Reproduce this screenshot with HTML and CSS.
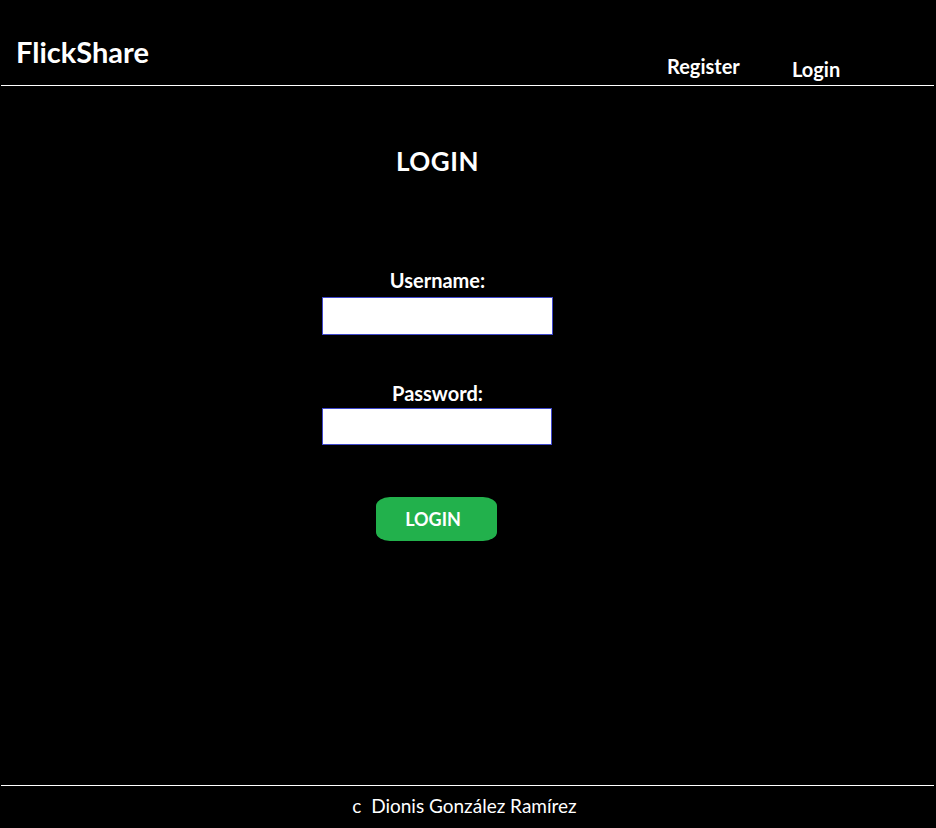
FILE: index.html
```html
<!DOCTYPE html>
<html lang="es">
<head>
<meta charset="utf-8">
<title>FlickShare - Login</title>
<link rel="stylesheet" href="styles.css">
</head>
<body>
<div class="page">
  <header class="topbar">
    <div class="brand">FlickShare</div>
    <a class="nav-link nav-register" href="#">Register</a>
    <a class="nav-link nav-login" href="#">Login</a>
  </header>
  <main class="content">
    <h1 class="title">LOGIN</h1>
    <form class="login-form">
      <label class="field-label label-user" for="user">Username:</label>
      <input class="field-input input-user" id="user" type="text">
      <label class="field-label label-pass" for="pass">Password:</label>
      <input class="field-input input-pass" id="pass" type="password">
      <button class="submit" type="button">LOGIN</button>
    </form>
  </main>
  <footer class="footer">
    <p class="credit">c&nbsp;&nbsp;Dionis González Ramírez</p>
  </footer>
</div>
</body>
</html>
```
FILE: styles.css
```css
* { box-sizing: border-box; }

html, body {
  margin: 0;
  padding: 0;
  background: #000;
}

body {
  font-family: Lato, "Open Sans", "Noto Sans", sans-serif;
  color: #fff;
}

.page {
  display: flex;
  flex-direction: column;
  min-height: 828px;
}

.topbar {
  display: grid;
  grid-template-columns: 651px 125px auto;
  align-items: start;
  height: 86px;
  padding-left: 15px;
  margin: 0 2px 0 1px;
  border-bottom: 1px solid #fff;
}

.brand {
  font-size: 29px;
  font-weight: 700;
  line-height: 34px;
  margin-top: 35px;
}

.nav-link {
  color: #fff;
  text-decoration: none;
  font-size: 20px;
  font-weight: 700;
  line-height: 24px;
}

.nav-register { margin-top: 54px; }
.nav-login { margin-top: 57px; }

.content {
  flex: 1;
  display: flex;
  flex-direction: column;
  align-items: center;
  padding-right: 61px;
}

.title {
  margin: 60px 0 0;
  font-size: 26px;
  font-weight: 700;
  line-height: 30px;
  letter-spacing: 0.5px;
}

.login-form {
  display: flex;
  flex-direction: column;
  align-items: center;
  margin-top: 92px;
}

.field-label {
  display: block;
  font-size: 20px;
  font-weight: 700;
  line-height: 24px;
}

.field-input {
  display: block;
  width: 231px;
  height: 38px;
  margin: 5px 0 0;
  padding: 0 4px;
  background: #fff;
  border: 1px solid #3f48cc;
  border-radius: 0;
  outline: none;
  font: inherit;
}

.label-pass { margin-top: 46px; }

.input-pass {
  width: 230px;
  height: 37px;
  margin-top: 3px;
  margin-left: -1px;
}

.submit {
  margin: 52px 0 0 -2px;
  width: 121px;
  height: 44px;
  background: #22b14c;
  color: #fff;
  border: none;
  border-radius: 14px / 9px;
  font-family: inherit;
  font-size: 18px;
  font-weight: 700;
  padding: 0 7px 0 0;
  cursor: pointer;
}

.footer {
  margin: 0 2px 0 1px;
  border-top: 1px solid #fff;
  height: 43px;
  padding-top: 9px;
}

.credit {
  margin: 0;
  text-align: center;
  font-size: 19px;
  line-height: 22px;
  padding-right: 6px;
}
```
